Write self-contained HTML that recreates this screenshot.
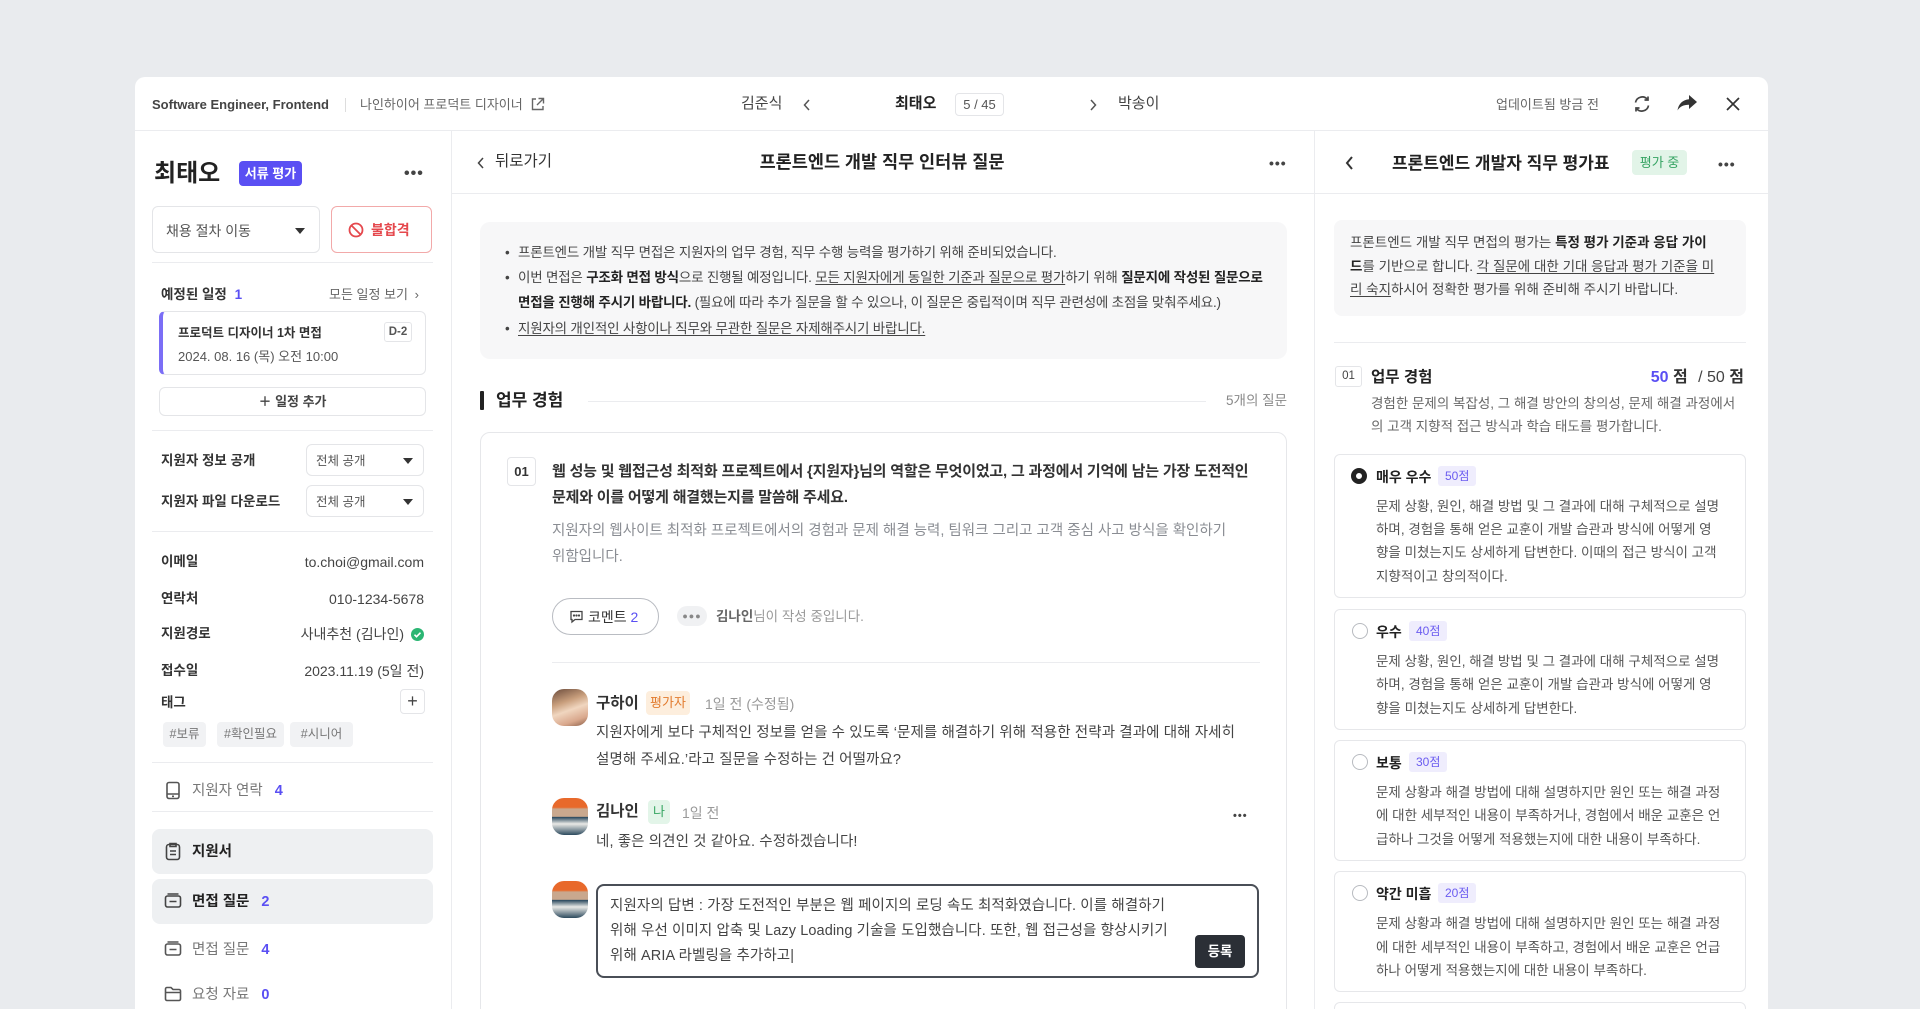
<!DOCTYPE html>
<html><head><meta charset="utf-8">
<style>
*{margin:0;padding:0;box-sizing:border-box}
html{width:1920px;height:1009px;overflow:hidden}
body{width:1920px;height:1009px;overflow:hidden;background:#e9ebee;font-family:"Liberation Sans","Noto Sans CJK KR",sans-serif;color:#222;position:relative}
.a{position:absolute}
.t{position:absolute;white-space:nowrap;line-height:20px}
.b{font-weight:700}
.c{letter-spacing:-0.2px}
.g{color:#8a8d93}
.p{color:#5a4ff3}
.hl{position:absolute;height:1px;background:#ebecef}
.vl{position:absolute;width:1px;background:#ebecef}
.box{position:absolute;border:1px solid #e4e5e8;border-radius:6px;background:#fff}
.u{text-decoration:underline;text-underline-offset:2px}
.caret{position:absolute;width:0;height:0;border-left:5px solid transparent;border-right:5px solid transparent;border-top:6px solid #333}
.tag{position:absolute;top:722px;height:25px;background:#f1f2f4;border-radius:4px;font-size:12.5px;color:#777;line-height:25px;text-align:center}
.opt{position:absolute;left:1334px;width:412px;border:1px solid #e6e7ea;border-radius:6px;background:#fff}
.radio{position:absolute;left:1352px;width:16px;height:16px;border-radius:50%;border:1.5px solid #b8bbc0;background:#fff}
.sc{position:absolute;height:20px;background:#efedfd;color:#6b5cf0;border-radius:3px;font-size:12px;line-height:20px;padding:0 7px}
.od{position:absolute;left:1376px;font-size:13.5px;color:#555;white-space:nowrap;line-height:20px}
.av{position:absolute;width:36px;height:37px;border-radius:12px;overflow:hidden}
.cm{letter-spacing:0.1px;font-size:14.5px}
</style></head><body>

<!-- card -->
<div class="a" style="left:135px;top:77px;width:1633px;height:932px;background:#fff;border-radius:10px 10px 0 0"></div>

<!-- top header -->
<div class="t b" style="left:152px;top:95px;font-size:13px;color:#444">Software Engineer, Frontend</div>
<div class="a" style="left:345px;top:98px;width:1px;height:14px;background:#ddd"></div>
<div class="t" style="left:360px;top:95px;font-size:13px;color:#666">나인하이어 프로덕트 디자이너</div>
<svg class="a" style="left:530px;top:97px" width="15" height="15" viewBox="0 0 15 15" fill="none" stroke="#666" stroke-width="1.4"><path d="M6 2H2.5v10.5H13V9"/><path d="M8.5 1.5h5v5M13.5 1.5L7 8"/></svg>
<div class="t" style="left:741px;top:94px;font-size:15px;color:#444">김준식</div>
<svg class="a" style="left:802px;top:98px" width="10" height="14" viewBox="0 0 10 14" fill="none" stroke="#555" stroke-width="1.5"><path d="M7 2L2.5 7 7 12"/></svg>
<div class="t b" style="left:895px;top:94px;font-size:15px;color:#222">최태오</div>
<div class="a" style="left:955px;top:93px;width:49px;height:23px;border:1px solid #e4e5e8;border-radius:4px;font-size:13px;color:#555;text-align:center;line-height:21px">5 / 45</div>
<svg class="a" style="left:1088px;top:98px" width="10" height="14" viewBox="0 0 10 14" fill="none" stroke="#555" stroke-width="1.5"><path d="M3 2l4.5 5L3 12"/></svg>
<div class="t" style="left:1118px;top:94px;font-size:15px;color:#444">박송이</div>
<div class="t" style="left:1496px;top:95px;font-size:13px;color:#666">업데이트됨 방금 전</div>
<svg class="a" style="left:1632px;top:94px" width="20" height="20" viewBox="0 0 20 20" fill="none" stroke="#444" stroke-width="1.7"><path d="M3.5 8.5A6.8 6.8 0 0 1 15.5 5.5"/><path d="M16.5 11.5A6.8 6.8 0 0 1 4.5 14.5"/><path d="M16 2.5v3.5h-3.5M4 17.5V14h3.5"/></svg>
<svg class="a" style="left:1676px;top:94px" width="22" height="18" viewBox="0 0 22 18"><path d="M13 1l8 7-8 7v-4.2C7.5 10.8 4 12.5 1.5 16.5 2.5 10 6.5 6 13 5.3z" fill="#333"/></svg>
<svg class="a" style="left:1725px;top:96px" width="16" height="16" viewBox="0 0 16 16" stroke="#333" stroke-width="1.7"><path d="M2 2l12 12M14 2L2 14"/></svg>
<div class="hl" style="left:135px;top:130px;width:1633px"></div>
<div class="vl" style="left:451px;top:130px;height:879px"></div>
<div class="vl" style="left:1314px;top:130px;height:879px"></div>

<!-- LEFT PANEL -->
<div class="t b" style="left:154px;top:159px;font-size:24px;line-height:30px">최태오</div>
<div class="a b" style="left:239px;top:161px;width:63px;height:25px;background:#5a4ff3;color:#fff;border-radius:4px;font-size:13px;text-align:center;line-height:25px">서류 평가</div>
<div class="t b" style="left:404px;top:164px;font-size:16px;color:#444;letter-spacing:1px">•••</div>
<div class="box" style="left:152px;top:206px;width:168px;height:47px"></div>
<div class="t" style="left:166px;top:221px;font-size:14px;color:#555">채용 절차 이동</div>
<div class="caret" style="left:295px;top:228px"></div>
<div class="box" style="left:331px;top:206px;width:101px;height:47px;border-color:#f2a9a9"></div>
<svg class="a" style="left:348px;top:222px" width="16" height="16" viewBox="0 0 16 16" fill="none" stroke="#e5484d" stroke-width="1.8"><circle cx="8" cy="8" r="6.5"/><path d="M3.5 3.5l9 9"/></svg>
<div class="t b" style="left:371px;top:220px;font-size:14px;color:#e5484d">불합격</div>
<div class="hl" style="left:152px;top:262px;width:281px"></div>

<div class="t b" style="left:161px;top:285px;font-size:13.5px;color:#333">예정된 일정 <span class="p" style="margin-left:4px">1</span></div>
<div class="t" style="left:329px;top:285px;font-size:13px;color:#666">모든 일정 보기 <span style="margin-left:3px">›</span></div>
<div class="box" style="left:159px;top:311px;width:267px;height:64px;border-left:4px solid #7b6ef6;border-radius:6px"></div>
<div class="t b" style="left:178px;top:323px;font-size:12.5px;color:#333">프로덕트 디자이너 1차 면접</div>
<div class="t" style="left:178px;top:347px;font-size:13px;color:#555">2024. 08. 16 (목) 오전 10:00</div>
<div class="box" style="left:384px;top:322px;width:28px;height:20px;font-size:11.5px;font-weight:700;color:#555;text-align:center;line-height:18px;border-radius:3px">D-2</div>
<div class="box" style="left:159px;top:387px;width:267px;height:29px;font-size:13px;font-weight:700;color:#444;text-align:center;line-height:27px">＋ 일정 추가</div>
<div class="hl" style="left:152px;top:430px;width:281px"></div>

<div class="t b" style="left:161px;top:451px;font-size:13.5px;color:#333">지원자 정보 공개</div>
<div class="box" style="left:306px;top:444px;width:118px;height:32px"></div>
<div class="t" style="left:316px;top:451px;font-size:12.5px;color:#555">전체 공개</div>
<div class="caret" style="left:403px;top:458px"></div>
<div class="t b" style="left:161px;top:492px;font-size:13.5px;color:#333">지원자 파일 다운로드</div>
<div class="box" style="left:306px;top:485px;width:118px;height:32px"></div>
<div class="t" style="left:316px;top:492px;font-size:12.5px;color:#555">전체 공개</div>
<div class="caret" style="left:403px;top:499px"></div>
<div class="hl" style="left:152px;top:531px;width:281px"></div>

<div class="t b" style="left:161px;top:552px;font-size:13.5px;color:#333">이메일</div>
<div class="t" style="right:1496px;top:552px;font-size:14px;color:#444">to.choi@gmail.com</div>
<div class="t b" style="left:161px;top:589px;font-size:13.5px;color:#333">연락처</div>
<div class="t" style="right:1496px;top:589px;font-size:14px;color:#444">010-1234-5678</div>
<div class="t b" style="left:161px;top:624px;font-size:13.5px;color:#333">지원경로</div>
<div class="t" style="right:1516px;top:624px;font-size:14px;color:#444">사내추천 (김나인)</div>
<svg class="a" style="left:411px;top:628px" width="13" height="13" viewBox="0 0 13 13"><circle cx="6.5" cy="6.5" r="6.5" fill="#2bb673"/><path d="M3.5 6.7l2 2 4-4" stroke="#fff" stroke-width="1.6" fill="none"/></svg>
<div class="t b" style="left:161px;top:661px;font-size:13.5px;color:#333">접수일</div>
<div class="t" style="right:1496px;top:661px;font-size:14px;color:#444">2023.11.19 (5일 전)</div>
<div class="t b" style="left:161px;top:693px;font-size:13.5px;color:#333">태그</div>
<div class="box" style="left:400px;top:689px;width:25px;height:25px;font-size:18px;line-height:22px;text-align:center;color:#444;border-radius:4px">+</div>
<div class="tag" style="left:163px;width:43px">#보류</div>
<div class="tag" style="left:217px;width:67px">#확인필요</div>
<div class="tag" style="left:290px;width:63px">#시니어</div>
<div class="hl" style="left:152px;top:762px;width:281px"></div>

<svg class="a" style="left:165px;top:781px" width="16" height="19" viewBox="0 0 16 19" fill="none" stroke="#555" stroke-width="1.6"><rect x="2" y="1.5" width="12" height="16" rx="2"/><path d="M2 13h12M7 15.3h2"/></svg>
<div class="t" style="left:192px;top:781px;font-size:14.5px;color:#777">지원자 연락 <span class="p b" style="margin-left:8px">4</span></div>
<div class="hl" style="left:152px;top:811px;width:281px"></div>

<div class="a" style="left:152px;top:829px;width:281px;height:45px;background:#eef0f2;border-radius:8px"></div>
<svg class="a" style="left:165px;top:842px" width="16" height="19" viewBox="0 0 16 19" fill="none" stroke="#444" stroke-width="1.6"><rect x="1.5" y="2.5" width="13" height="15" rx="2.5"/><path d="M5 1.5h6v3H5zM5 9h6M5 12.5h6"/></svg>
<div class="t b" style="left:192px;top:842px;font-size:14.5px;color:#222">지원서</div>
<div class="a" style="left:152px;top:879px;width:281px;height:45px;background:#eef0f2;border-radius:8px"></div>
<svg class="a" style="left:164px;top:893px" width="18" height="16" viewBox="0 0 18 16" fill="none" stroke="#444" stroke-width="1.6"><rect x="1.5" y="3" width="15" height="11" rx="2"/><path d="M3.5 1h11M5.5 8.5h7"/></svg>
<div class="t b" style="left:192px;top:892px;font-size:14.5px;color:#222">면접 질문 <span class="p" style="margin-left:8px">2</span></div>
<svg class="a" style="left:164px;top:941px" width="18" height="16" viewBox="0 0 18 16" fill="none" stroke="#555" stroke-width="1.6"><rect x="1.5" y="3" width="15" height="11" rx="2"/><path d="M3.5 1h11M5.5 8.5h7"/></svg>
<div class="t" style="left:192px;top:940px;font-size:14.5px;color:#777">면접 질문 <span class="p b" style="margin-left:8px">4</span></div>
<svg class="a" style="left:164px;top:986px" width="18" height="16" viewBox="0 0 18 16" fill="none" stroke="#555" stroke-width="1.6"><path d="M1.5 3a1.5 1.5 0 0 1 1.5-1.5h4l2 2h6a1.5 1.5 0 0 1 1.5 1.5v8a1.5 1.5 0 0 1-1.5 1.5H3A1.5 1.5 0 0 1 1.5 13zM1.5 6.5h15"/></svg>
<div class="t" style="left:192px;top:985px;font-size:14.5px;color:#777">요청 자료 <span class="p b" style="margin-left:8px">0</span></div>

<!-- MIDDLE PANEL -->
<svg class="a" style="left:476px;top:156px" width="10" height="14" viewBox="0 0 10 14" fill="none" stroke="#444" stroke-width="1.5"><path d="M7 2L2.5 7 7 12"/></svg>
<div class="t" style="left:495px;top:152px;font-size:15.5px;color:#333">뒤로가기</div>
<div class="t b" style="left:882px;top:152px;font-size:17.5px;transform:translateX(-50%)">프론트엔드 개발 직무 인터뷰 질문</div>
<div class="t b" style="left:1269px;top:153px;font-size:14px;color:#444;letter-spacing:1px">•••</div>
<div class="hl" style="left:451px;top:193px;width:863px"></div>

<div class="a" style="left:480px;top:222px;width:807px;height:137px;background:#f7f7f8;border-radius:10px"></div>
<div class="t c" style="left:505px;top:243px;font-size:13.5px;color:#444">•</div>
<div class="t c" style="left:518px;top:243px;font-size:13.5px;color:#444">프론트엔드 개발 직무 면접은 지원자의 업무 경험, 직무 수행 능력을 평가하기 위해 준비되었습니다.</div>
<div class="t c" style="left:505px;top:268px;font-size:13.5px;color:#444">•</div>
<div class="t c" style="left:518px;top:268px;font-size:13.5px;color:#444">이번 면접은 <b style="color:#222">구조화 면접 방식</b>으로 진행될 예정입니다. <span class="u">모든 지원자에게 동일한 기준과 질문으로 평가</span>하기 위해 <b style="color:#222">질문지에 작성된 질문으로</b></div>
<div class="t c" style="left:518px;top:293px;font-size:13.5px;color:#444"><b style="color:#222">면접을 진행해 주시기 바랍니다.</b> (필요에 따라 추가 질문을 할 수 있으나, 이 질문은 중립적이며 직무 관련성에 초점을 맞춰주세요.)</div>
<div class="t c" style="left:505px;top:319px;font-size:13.5px;color:#444">•</div>
<div class="t c u" style="left:518px;top:319px;font-size:13.5px;color:#444">지원자의 개인적인 사항이나 직무와 무관한 질문은 자제해주시기 바랍니다.</div>

<div class="a" style="left:480px;top:391px;width:4px;height:19px;background:#222;border-radius:1px"></div>
<div class="t b" style="left:496px;top:390px;font-size:17px;line-height:22px">업무 경험</div>
<div class="hl" style="left:588px;top:401px;width:618px"></div>
<div class="t" style="right:633px;top:391px;font-size:13.5px;color:#888">5개의 질문</div>

<div class="a" style="left:480px;top:432px;width:807px;height:600px;border:1px solid #e6e7ea;border-radius:10px"></div>
<div class="box" style="left:507px;top:457px;width:29px;height:29px;font-size:13px;font-weight:700;text-align:center;line-height:27px;color:#333;border-radius:4px">01</div>
<div class="t b" style="left:552px;top:461px;font-size:15px;letter-spacing:-0.2px;line-height:22px;color:#333">웹 성능 및 웹접근성 최적화 프로젝트에서 {지원자}님의 역할은 무엇이었고, 그 과정에서 기억에 남는 가장 도전적인</div>
<div class="t b" style="left:552px;top:487px;font-size:15px;letter-spacing:-0.2px;line-height:22px;color:#333">문제와 이를 어떻게 해결했는지를 말씀해 주세요.</div>
<div class="t" style="left:552px;top:521px;font-size:14.5px;letter-spacing:0;color:#8a8d93">지원자의 웹사이트 최적화 프로젝트에서의 경험과 문제 해결 능력, 팀워크 그리고 고객 중심 사고 방식을 확인하기</div>
<div class="t" style="left:552px;top:547px;font-size:14.5px;color:#8a8d93">위함입니다.</div>

<div class="a" style="left:552px;top:598px;width:107px;height:37px;border:1.5px solid #b9bcc2;border-radius:19px"></div>
<svg class="a" style="left:569px;top:609px" width="15" height="15" viewBox="0 0 15 15" fill="none" stroke="#444" stroke-width="1.3"><path d="M2 2.5h11v8H6l-3 2.5v-2.5H2z"/><circle cx="5" cy="6.5" r=".5" fill="#444"/><circle cx="7.5" cy="6.5" r=".5" fill="#444"/><circle cx="10" cy="6.5" r=".5" fill="#444"/></svg>
<div class="t" style="left:588px;top:607px;font-size:14px;color:#333">코멘트 <span class="p">2</span></div>
<div class="a" style="left:677px;top:606px;width:30px;height:20px;background:#f0f1f3;border-radius:10px;font-size:9px;color:#888;text-align:center;line-height:20px;letter-spacing:1px">●●●</div>
<div class="t" style="left:716px;top:607px;font-size:13.5px;color:#999"><b style="color:#666">김나인</b>님이 작성 중입니다.</div>
<div class="hl" style="left:552px;top:662px;width:708px"></div>

<div class="av" style="left:552px;top:689px;background:linear-gradient(160deg,#6b4b3b 0%,#c99f7d 35%,#f0d6bf 55%,#d9a88d 80%,#8a5e48 100%)"></div>
<div class="t b" style="left:596px;top:693px;font-size:15.5px;color:#333;line-height:22px">구하이</div>
<div class="a" style="left:646px;top:691px;width:44px;height:24px;background:#fdeedd;color:#e27b2e;border-radius:4px;font-size:13px;text-align:center;line-height:24px">평가자</div>
<div class="t" style="left:705px;top:694px;font-size:14px;color:#999">1일 전 (수정됨)</div>
<div class="t cm" style="left:596px;top:723px;color:#444">지원자에게 보다 구체적인 정보를 얻을 수 있도록 ‘문제를 해결하기 위해 적용한 전략과 결과에 대해 자세히</div>
<div class="t cm" style="left:596px;top:750px;color:#444">설명해 주세요.’라고 질문을 수정하는 건 어떨까요?</div>

<div class="av" style="left:552px;top:798px;background:linear-gradient(180deg,#e8692b 0%,#e8692b 25%,#c9a88e 30%,#c9a88e 50%,#2d4a5e 52%,#e9e9e6 70%,#2d4a5e 100%)"></div>
<div class="t b" style="left:596px;top:801px;font-size:15.5px;color:#333;line-height:22px">김나인</div>
<div class="a" style="left:648px;top:800px;width:22px;height:24px;background:#e3f5e9;color:#35a561;border-radius:4px;font-size:13px;text-align:center;line-height:24px">나</div>
<div class="t" style="left:682px;top:803px;font-size:14px;color:#999">1일 전</div>
<div class="t b" style="left:1233px;top:806px;font-size:11px;color:#444;letter-spacing:1px">•••</div>
<div class="t cm" style="left:596px;top:832px;color:#444">네, 좋은 의견인 것 같아요. 수정하겠습니다!</div>

<div class="av" style="left:552px;top:881px;background:linear-gradient(180deg,#e8692b 0%,#e8692b 25%,#c9a88e 30%,#c9a88e 50%,#2d4a5e 52%,#e9e9e6 70%,#2d4a5e 100%)"></div>
<div class="a" style="left:596px;top:884px;width:663px;height:94px;border:2px solid #4a4f57;border-radius:8px"></div>
<div class="t cm" style="left:610px;top:896px;color:#444">지원자의 답변 : 가장 도전적인 부분은 웹 페이지의 로딩 속도 최적화였습니다. 이를 해결하기</div>
<div class="t cm" style="left:610px;top:921px;color:#444">위해 우선 이미지 압축 및 Lazy Loading 기술을 도입했습니다. 또한, 웹 접근성을 향상시키기</div>
<div class="t cm" style="left:610px;top:946px;color:#444">위해 ARIA 라벨링을 추가하고|</div>
<div class="a b" style="left:1195px;top:935px;width:50px;height:33px;background:#2b2f36;color:#fff;border-radius:4px;font-size:13.5px;text-align:center;line-height:33px">등록</div>

<!-- RIGHT PANEL -->
<svg class="a" style="left:1344px;top:155px" width="11" height="16" viewBox="0 0 11 16" fill="none" stroke="#333" stroke-width="2"><path d="M8 2L3 8l5 6"/></svg>
<div class="t b" style="left:1392px;top:153px;font-size:17px;color:#222;line-height:22px">프론트엔드 개발자 직무 평가표</div>
<div class="a" style="left:1632px;top:150px;width:55px;height:25px;background:#e2f4e8;color:#36a463;border-radius:4px;font-size:13px;text-align:center;line-height:25px">평가 중</div>
<div class="t b" style="left:1718px;top:154px;font-size:14px;color:#444;letter-spacing:1px">•••</div>
<div class="hl" style="left:1314px;top:193px;width:454px"></div>

<div class="a" style="left:1334px;top:220px;width:412px;height:96px;background:#f7f7f8;border-radius:8px"></div>
<div class="t" style="left:1350px;top:233px;font-size:13.5px;color:#444">프론트엔드 개발 직무 면접의 평가는 <b style="color:#222">특정 평가 기준과 응답 가이</b></div>
<div class="t" style="left:1350px;top:257px;font-size:13.5px;color:#444"><b style="color:#222">드</b>를 기반으로 합니다. <span class="u">각 질문에 대한 기대 응답과 평가 기준을 미</span></div>
<div class="t" style="left:1350px;top:280px;font-size:13.5px;color:#444"><span class="u">리 숙지</span>하시어 정확한 평가를 위해 준비해 주시기 바랍니다.</div>
<div class="hl" style="left:1334px;top:342px;width:412px"></div>

<div class="box" style="left:1335px;top:366px;width:27px;height:21px;font-size:11.5px;text-align:center;line-height:19px;color:#444;border-radius:3px">01</div>
<div class="t b" style="left:1371px;top:367px;font-size:15.5px;color:#222;line-height:22px">업무 경험</div>
<div class="t" style="right:176px;top:367px;font-size:16px;color:#444;line-height:22px"><b class="p">50</b> <b style="color:#333">점</b> <span style="margin-left:6px">/ 50</span> <b style="color:#333">점</b></div>
<div class="t" style="left:1371px;top:394px;font-size:13.5px;color:#666">경험한 문제의 복잡성, 그 해결 방안의 창의성, 문제 해결 과정에서</div>
<div class="t" style="left:1371px;top:417px;font-size:13.5px;color:#666">의 고객 지향적 접근 방식과 학습 태도를 평가합니다.</div>

<div class="opt" style="top:454px;height:144px"></div>
<div class="radio" style="left:1351px;top:468px;border:5px solid #222"></div>
<div class="t b" style="left:1376px;top:467px;font-size:14px;color:#222">매우 우수</div>
<div class="sc" style="left:1438px;top:466px">50점</div>
<div class="od" style="top:497px">문제 상황, 원인, 해결 방법 및 그 결과에 대해 구체적으로 설명</div>
<div class="od" style="top:520px">하며, 경험을 통해 얻은 교훈이 개발 습관과 방식에 어떻게 영</div>
<div class="od" style="top:543px">향을 미쳤는지도 상세하게 답변한다. 이때의 접근 방식이 고객</div>
<div class="od" style="top:567px">지향적이고 창의적이다.</div>

<div class="opt" style="top:609px;height:121px"></div>
<div class="radio" style="top:623px"></div>
<div class="t b" style="left:1376px;top:622px;font-size:14px;color:#222">우수</div>
<div class="sc" style="left:1409px;top:621px">40점</div>
<div class="od" style="top:652px">문제 상황, 원인, 해결 방법 및 그 결과에 대해 구체적으로 설명</div>
<div class="od" style="top:675px">하며, 경험을 통해 얻은 교훈이 개발 습관과 방식에 어떻게 영</div>
<div class="od" style="top:699px">향을 미쳤는지도 상세하게 답변한다.</div>

<div class="opt" style="top:740px;height:121px"></div>
<div class="radio" style="top:754px"></div>
<div class="t b" style="left:1376px;top:753px;font-size:14px;color:#222">보통</div>
<div class="sc" style="left:1409px;top:752px">30점</div>
<div class="od" style="top:783px">문제 상황과 해결 방법에 대해 설명하지만 원인 또는 해결 과정</div>
<div class="od" style="top:806px">에 대한 세부적인 내용이 부족하거나, 경험에서 배운 교훈은 언</div>
<div class="od" style="top:830px">급하나 그것을 어떻게 적용했는지에 대한 내용이 부족하다.</div>

<div class="opt" style="top:871px;height:121px"></div>
<div class="radio" style="top:885px"></div>
<div class="t b" style="left:1376px;top:884px;font-size:14px;color:#222">약간 미흡</div>
<div class="sc" style="left:1438px;top:883px">20점</div>
<div class="od" style="top:914px">문제 상황과 해결 방법에 대해 설명하지만 원인 또는 해결 과정</div>
<div class="od" style="top:938px">에 대한 세부적인 내용이 부족하고, 경험에서 배운 교훈은 언급</div>
<div class="od" style="top:961px">하나 어떻게 적용했는지에 대한 내용이 부족하다.</div>

<div class="opt" style="top:1002px;height:40px"></div>
</body></html>
